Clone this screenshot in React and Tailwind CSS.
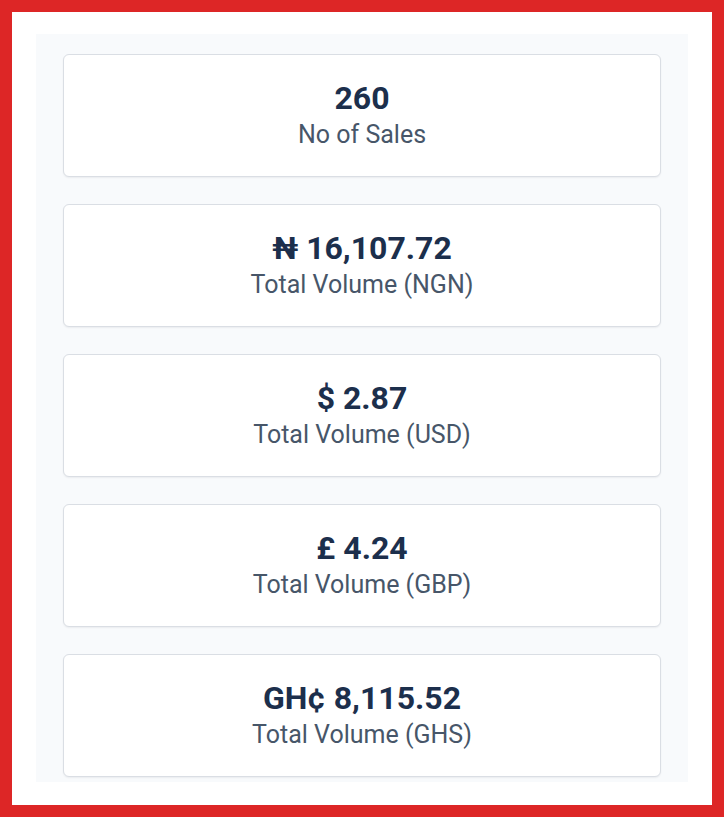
const stats = [
  { value: "260", label: "No of Sales" },
  { value: "₦ 16,107.72", label: "Total Volume (NGN)" },
  { value: "$ 2.87", label: "Total Volume (USD)" },
  { value: "£ 4.24", label: "Total Volume (GBP)" },
  { value: "GH¢ 8,115.52", label: "Total Volume (GHS)" },
];

function StatCard({ value, label }) {
  return (
    <div className="flex h-[123px] shrink-0 flex-col items-center justify-center rounded-[6px] border border-[#dadee4] bg-white shadow-[0_1px_2px_rgba(15,23,42,0.06)]">
      <div className="text-[32px] font-bold leading-[38px] text-[#1c2f4c]">{value}</div>
      <div className="text-[25px] leading-[36px] text-[#475669]">{label}</div>
    </div>
  );
}

export default function App() {
  return (
    <div
      className="h-[817px] w-[724px] bg-[#dd2626] p-3"
      style={{ fontFamily: "Roboto, 'Liberation Sans', sans-serif" }}
    >
      <div className="h-full bg-white px-6 pt-[22px]">
        <div className="flex h-[748px] flex-col gap-[27px] overflow-hidden bg-[#f8fafc] px-[27px] pt-[20px]">
          {stats.map((s) => (
            <StatCard key={s.label} value={s.value} label={s.label} />
          ))}
        </div>
      </div>
    </div>
  );
}
